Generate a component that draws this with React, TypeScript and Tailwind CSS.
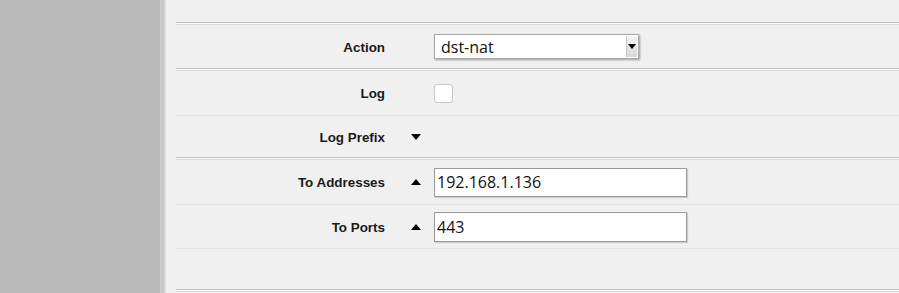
import React from "react";

function Sep() {
  return <div className="h-[3px] border-t border-b border-t-[#c2c2c2] border-b-[#dadada] bg-[#fbfbfb]" />;
}
function Light() {
  return <div className="h-px bg-[#e2e2e2]" />;
}

function Down() {
  return <div className="w-0 h-0 border-l-[5px] border-r-[5px] border-t-[6px] border-l-transparent border-r-transparent border-t-black" />;
}
function Up() {
  return <div className="w-0 h-0 border-l-[5px] border-r-[5px] border-b-[6px] border-l-transparent border-r-transparent border-b-black" />;
}

function Row({ h, label, arrow, children }: { h: string; label: string; arrow?: "up" | "down"; children?: React.ReactNode }) {
  return (
    <div className={`flex items-center ${h}`}>
      <div className="w-[209px] pt-[3px] text-right text-[13.4px] font-bold text-[#1a1a1a] [font-family:'Liberation_Sans',Arial,sans-serif]">{label}</div>
      <div className="w-[49px] flex justify-center pl-[13px]">
        {arrow === "down" ? <Down /> : arrow === "up" ? <Up /> : null}
      </div>
      {children}
    </div>
  );
}

export default function App() {
  return (
    <div className="w-[899px] h-[293px] flex overflow-hidden bg-[#f0f0f0] [font-family:'Open_Sans',sans-serif]">
      <div className="w-[160px] h-full bg-[#bababa] shrink-0" />
      <div className="w-[6px] h-full shrink-0 bg-gradient-to-r from-[#cdcdcd] via-[#c6c6c6] to-[#e4e4e4]" />
      <div className="flex-1 pl-[10px] flex flex-col">
        <div className="h-[22px]" />
        <Sep />
        <Row h="h-[43px]" label="Action">
          <div className="relative w-[205px] h-[25px] bg-white border border-[#a8a8a8] shadow-[1px_1px_2px_rgba(0,0,0,0.35)] flex items-center">
            <span className="pl-[6px] text-[16px] leading-none text-[#111]">dst-nat</span>
            <div className="absolute right-[1px] top-[1px] bottom-[1px] w-[11px] bg-gradient-to-b from-[#f4f4f4] to-[#d8d8d8] border-l border-[#c4c4c4] flex items-center justify-center">
              <div className="w-0 h-0 border-l-[4px] border-r-[4px] border-t-[5px] border-l-transparent border-r-transparent border-t-black" />
            </div>
          </div>
        </Row>
        <Sep />
        <Row h="h-[44px]" label="Log">
          <div className="w-[19px] h-[19px] bg-white border border-[#c8c8c8] rounded-[3px]" />
        </Row>
        <Light />
        <Row h="h-[41px]" label="Log Prefix" arrow="down" />
        <Sep />
        <Row h="h-[44px]" label="To Addresses" arrow="up">
          <div className="w-[253px] h-[29px] bg-white border border-[#9a9a9a] shadow-[1px_1px_1px_rgba(0,0,0,0.15)] flex items-center">
            <span className="pl-[2px] text-[16px] leading-none text-[#111]">192.168.1.136</span>
          </div>
        </Row>
        <Light />
        <Row h="h-[43px]" label="To Ports" arrow="up">
          <div className="w-[253px] h-[30px] bg-white border border-[#9a9a9a] shadow-[1px_1px_1px_rgba(0,0,0,0.15)] flex items-center">
            <span className="pl-[2px] text-[16px] leading-none text-[#111]">443</span>
          </div>
        </Row>
        <Light />
        <div className="h-[40px]" />
        <Sep />
      </div>
    </div>
  );
}
